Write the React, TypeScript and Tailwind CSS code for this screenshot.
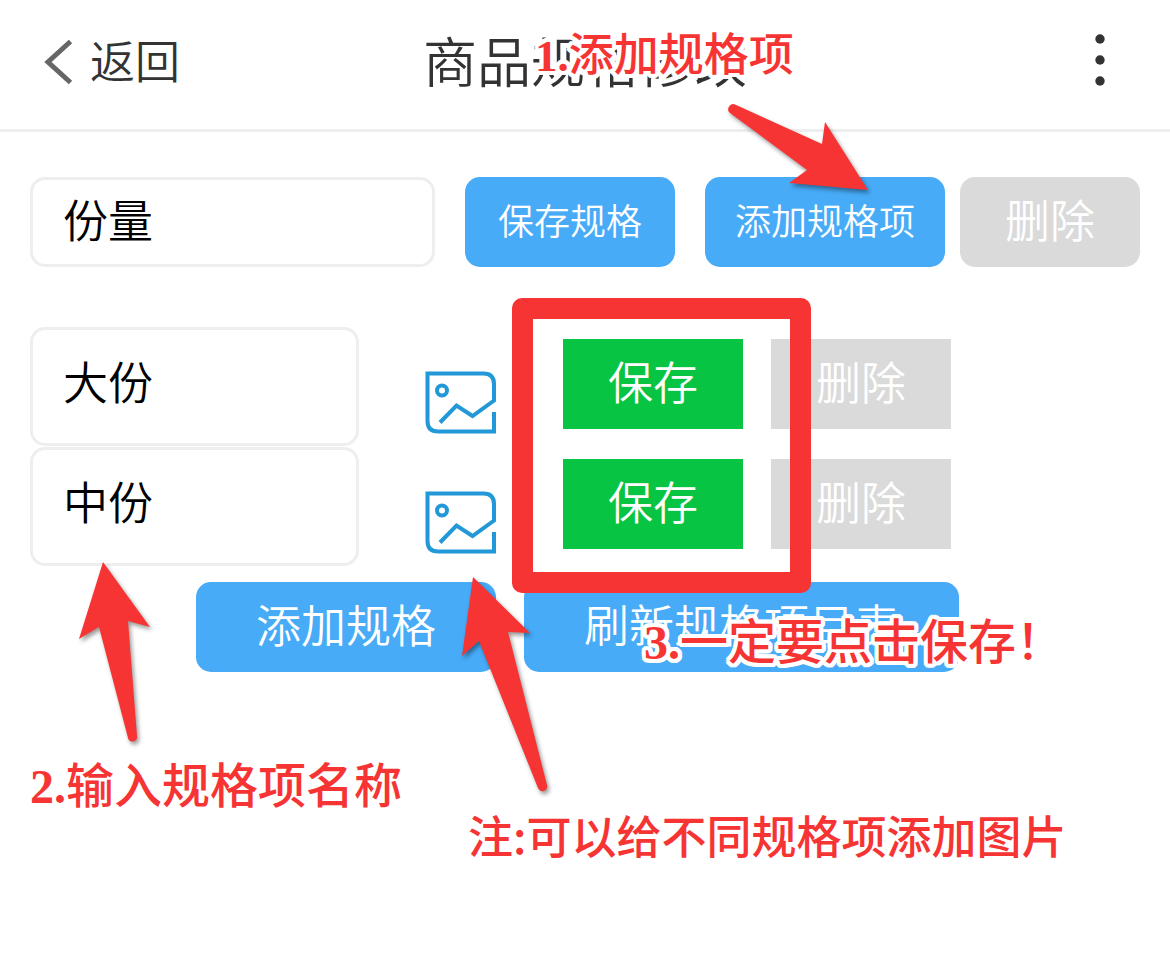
import { useState } from "react";

const specItems = [
  { id: "large", name: "大份" },
  { id: "medium", name: "中份" },
];

// white outline with round corners, so the notes stay readable over the buttons
const halo =
  "[text-shadow:4px_0_white,-4px_0_white,0_4px_white,0_-4px_white,3px_3px_white,-3px_3px_white,3px_-3px_white,-3px_-3px_white,4px_2px_white,-4px_2px_white,4px_-2px_white,-4px_-2px_white,2px_4px_white,-2px_4px_white,2px_-4px_white,-2px_-4px_white,2px_0_white,-2px_0_white,0_2px_white,0_-2px_white]";

function BackIcon() {
  return (
    <svg viewBox="0 0 30 46" className="mt-1 h-[46px] w-[30px]" fill="none" stroke="#666" strokeWidth="5" aria-hidden="true">
      <path d="M26.5 2.5 4 23l22.500 20.500" />
    </svg>
  );
}

function MoreIcon() {
  return (
    <svg viewBox="0 0 12 54" className="h-[54px] w-3" fill="#333" aria-hidden="true">
      <circle cx="6" cy="6" r="4.700" />
      <circle cx="6" cy="27" r="4.700" />
      <circle cx="6" cy="48" r="4.700" />
    </svg>
  );
}

function PictureIcon() {
  return (
    <svg viewBox="0 0 72 63" className="h-[63px] w-[72px]" fill="none" stroke="#2298d8" strokeWidth="4" aria-hidden="true">
      <path d="M15 51.500 31.500 34.500 47.500 45 69 29.500V13Q69 2.500 58.500 2.500H2.500V50Q2.500 60.500 13 60.500H69V41" />
      <circle cx="17" cy="19.500" r="5" />
    </svg>
  );
}

function Arrow({ className, viewBox, d }: { className: string; viewBox: string; d: string }) {
  return (
    <svg viewBox={viewBox} className={`pointer-events-none absolute overflow-visible drop-shadow-[2px_3px_2px_rgba(0,0,0,0.4)] ${className}`} fill="#f73434" aria-hidden="true">
      <path d={d} />
    </svg>
  );
}

function SpecRow({ id, name }: { id: string; name: string }) {
  const [value, setValue] = useState(name);
  return (
    <li className="flex h-[120px] items-start pr-[189px]">
      <input
        id={id}
        aria-label="规格项名称"
        value={value}
        onChange={(e) => setValue(e.target.value)}
        className="h-[119px] min-w-0 flex-1 rounded-[15px] border-[3px] border-[#eee] bg-white px-[30px] pb-3 text-[45px] text-black"
      />
      <button type="button" aria-label="添加图片" className="mx-[66px] mt-11">
        <PictureIcon />
      </button>
      <button type="button" className="mt-3 mr-7 h-[90px] w-[180px] bg-[#07c442] pb-1.5 text-[45px] text-white">保存</button>
      <button type="button" className="mt-3 h-[90px] w-[180px] bg-[#dadada] pb-1.5 text-[45px] text-white">删除</button>
    </li>
  );
}

export default function App() {
  const [group, setGroup] = useState("份量");

  return (
    <div className="relative min-h-screen bg-white font-['Noto_Sans_CJK_SC',sans-serif] font-[350]">
      <header className="grid h-[132px] grid-cols-[1fr_auto_1fr] items-center border-b-[3px] border-[#eee] px-11 pb-2.5 text-[#333]">
        <a href="#back" className="flex items-center gap-4 text-[45px]">
          <BackIcon />
          返回
        </a>
        <h1 className="text-[54px]">商品规格修改</h1>
        <button type="button" aria-label="更多" className="mr-5 justify-self-end">
          <MoreIcon />
        </button>
      </header>

      <main className="px-[30px] pt-[45px]">
        <div className="flex">
          <input
            aria-label="规格名称"
            value={group}
            onChange={(e) => setGroup(e.target.value)}
            className="mr-[30px] h-[90px] min-w-0 flex-1 rounded-[15px] border-[3px] border-[#eee] bg-white px-[30px] pb-2 text-[45px] text-black"
          />
          <button type="button" className="mr-[30px] w-[210px] rounded-[15px] bg-[#47abf7] pb-1.5 text-[36px] text-white">保存规格</button>
          <button type="button" className="mr-[15px] w-[240px] rounded-[15px] bg-[#47abf7] pb-1.5 text-[36px] text-white">添加规格项</button>
          <button type="button" className="w-[180px] rounded-[15px] bg-[#dadada] pb-1.5 text-[45px] text-white">删除</button>
        </div>

        <ul className="mt-[60px]">
          {specItems.map((item) => (
            <SpecRow key={item.id} id={item.id} name={item.name} />
          ))}
        </ul>

        <div className="mt-[15px] flex justify-center gap-7 pr-[15px]">
          <button type="button" className="h-[90px] w-[300px] rounded-[15px] bg-[#47abf7] pb-1.5 text-[45px] text-white">添加规格</button>
          <button type="button" className="h-[90px] w-[435px] rounded-[15px] bg-[#47abf7] pb-1.5 text-[45px] text-white">刷新规格项目表</button>
        </div>
      </main>

      {/* tutorial marks lying over the form */}
      <div className="pointer-events-none absolute top-[298px] left-[512px] h-[295px] w-[299px] rounded-[10px] border-[21px] border-[#f73434]" />
      <Arrow className="top-[104px] left-[728px] h-[86px] w-[140px]" viewBox="728 104 140 86" d="M735 104.500 822 144 825 122 868 190 789 183 807 170 730 113A5 5 0 0 1 735 104.500Z" />
      <Arrow className="top-[562px] left-[79px] h-[179px] w-[71px]" viewBox="79 562 71 179" d="M103 562 150 627 128 621 137 736A4.500 4.500 0 0 1 128 738L99 627 79 639Z" />
      <Arrow className="top-[577px] left-[462px] h-[213px] w-[68px]" viewBox="462 577 68 213" d="M473 577 530 633 508 632 547 785A4.500 4.500 0 0 1 538 788L479 641 462 656Z" />

      <p className={`absolute top-[18px] left-[535px] text-[45px] leading-[68px] font-medium whitespace-nowrap text-[#f73434] ${halo}`}>
        <span className="font-['Liberation_Serif',serif] font-bold">1.</span>添加规格项
      </p>
      <p className="absolute top-[748px] left-[30px] text-[48px] leading-[68px] font-medium whitespace-nowrap text-[#f73434]">
        <span className="font-['Liberation_Serif',serif] font-bold">2.</span>输入规格项名称
      </p>
      <p className={`absolute top-[604px] left-[644px] text-[48px] leading-[68px] font-medium whitespace-nowrap text-[#f73434] ${halo}`}>
        <span className="font-['Liberation_Serif',serif] font-bold">3.</span>一定要点击保存！
      </p>
      <p className="absolute top-[801px] left-[468px] text-[45px] leading-[68px] font-medium whitespace-nowrap text-[#f73434]">注:可以给不同规格项添加图片</p>
    </div>
  );
}
